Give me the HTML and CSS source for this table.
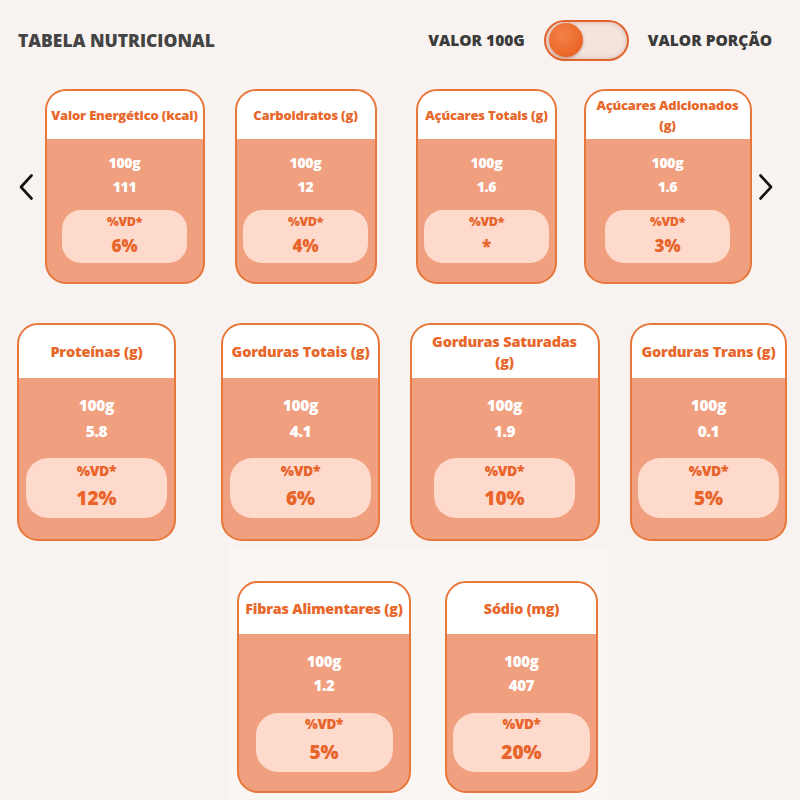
FILE: index.html
```html
<!DOCTYPE html>
<html lang="pt-BR">
<head>
<meta charset="utf-8">
<title>Tabela Nutricional</title>
<link rel="stylesheet" href="styles.css">
</head>
<body>
<div class="page">
  <header class="topbar">
    <h1 class="title">TABELA NUTRICIONAL</h1>
    <div class="switch-group">
      <span class="switch-label">VALOR 100G</span>
      <div class="toggle"><span class="knob"></span></div>
      <span class="switch-label">VALOR PORÇÃO</span>
    </div>
  </header>

  <section class="row row-1">
    <button class="arrow" aria-label="Anterior">
      <svg width="16" height="26" viewBox="0 0 16 26"><path d="M13.5 1.5 L3 13 L13.5 24.5" fill="none" stroke="#111" stroke-width="2.6" stroke-linecap="round" stroke-linejoin="round"/></svg>
    </button>
    <div class="slots">
      <div class="slot">
        <div class="card w-160">
          <div class="card-head">Valor Energético (kcal)</div>
          <div class="card-body">
            <div class="val">100g</div><div class="val">111</div>
            <div class="pill"><div class="pill-label">%VD*</div><div class="pill-value">6%</div></div>
          </div>
        </div>
      </div>
      <div class="slot">
        <div class="card w-142">
          <div class="card-head">Carboidratos (g)</div>
          <div class="card-body">
            <div class="val">100g</div><div class="val">12</div>
            <div class="pill"><div class="pill-label">%VD*</div><div class="pill-value">4%</div></div>
          </div>
        </div>
      </div>
      <div class="slot">
        <div class="card w-141">
          <div class="card-head">Açúcares Totais (g)</div>
          <div class="card-body">
            <div class="val">100g</div><div class="val">1.6</div>
            <div class="pill"><div class="pill-label">%VD*</div><div class="pill-value star">*</div></div>
          </div>
        </div>
      </div>
      <div class="slot">
        <div class="card w-168">
          <div class="card-head">Açúcares Adicionados<br>(g)</div>
          <div class="card-body">
            <div class="val">100g</div><div class="val">1.6</div>
            <div class="pill"><div class="pill-label">%VD*</div><div class="pill-value">3%</div></div>
          </div>
        </div>
      </div>
    </div>
    <button class="arrow" aria-label="Próximo">
      <svg width="16" height="26" viewBox="0 0 16 26"><path d="M2.5 1.5 L13 13 L2.5 24.5" fill="none" stroke="#111" stroke-width="2.6" stroke-linecap="round" stroke-linejoin="round"/></svg>
    </button>
  </section>

  <section class="row row-2">
    <div class="slot">
      <div class="card w-159">
        <div class="card-head">Proteínas (g)</div>
        <div class="card-body">
          <div class="val">100g</div><div class="val">5.8</div>
          <div class="pill"><div class="pill-label">%VD*</div><div class="pill-value">12%</div></div>
        </div>
      </div>
    </div>
    <div class="slot">
      <div class="card w-159">
        <div class="card-head">Gorduras Totais (g)</div>
        <div class="card-body">
          <div class="val">100g</div><div class="val">4.1</div>
          <div class="pill"><div class="pill-label">%VD*</div><div class="pill-value">6%</div></div>
        </div>
      </div>
    </div>
    <div class="slot">
      <div class="card w-190">
        <div class="card-head">Gorduras Saturadas<br>(g)</div>
        <div class="card-body">
          <div class="val">100g</div><div class="val">1.9</div>
          <div class="pill"><div class="pill-label">%VD*</div><div class="pill-value">10%</div></div>
        </div>
      </div>
    </div>
    <div class="slot">
      <div class="card w-157">
        <div class="card-head">Gorduras Trans (g)</div>
        <div class="card-body">
          <div class="val">100g</div><div class="val">0.1</div>
          <div class="pill"><div class="pill-label">%VD*</div><div class="pill-value">5%</div></div>
        </div>
      </div>
    </div>
  </section>

  <section class="row row-3">
    <div class="card w-174">
      <div class="card-head">Fibras Alimentares (g)</div>
      <div class="card-body">
        <div class="val">100g</div><div class="val">1.2</div>
        <div class="pill"><div class="pill-label">%VD*</div><div class="pill-value">5%</div></div>
      </div>
    </div>
    <div class="card w-153">
      <div class="card-head">Sódio (mg)</div>
      <div class="card-body">
        <div class="val">100g</div><div class="val">407</div>
        <div class="pill"><div class="pill-label">%VD*</div><div class="pill-value">20%</div></div>
      </div>
    </div>
  </section>
</div>
</body>
</html>
```

FILE: styles.css
```css
* { box-sizing: border-box; }

html, body {
  margin: 0;
  padding: 0;
  background: #f8f3f0;
  overflow: hidden;
}

body {
  font-family: "Open Sans", "Lato", "Liberation Sans", sans-serif;
  color: #3c3c3c;
  width: 800px;
  height: 800px;
}

.page {
  width: 800px;
}

/* ---------- top bar ---------- */
.topbar {
  height: 80px;
  display: flex;
  align-items: center;
  justify-content: space-between;
  padding: 0 28px 0 18px;
}

.title {
  margin: 0;
  font-size: 17.5px;
  font-weight: 800;
  letter-spacing: 0;
  color: #444444;
}

.switch-group {
  display: flex;
  align-items: center;
  gap: 19px;
}

.switch-label {
  font-size: 15.5px;
  font-weight: 800;
  letter-spacing: 0;
  color: #3a3a3a;
}

.toggle {
  width: 85px;
  height: 41px;
  border: 2px solid #e2632b;
  border-radius: 21px;
  background: #f3e4de;
  box-shadow: inset 0 0 5px rgba(160, 90, 60, 0.35);
  display: flex;
  align-items: center;
  padding-left: 3px;
}

.knob {
  width: 34px;
  height: 34px;
  border-radius: 50%;
  background: radial-gradient(circle at 40% 35%, #f3824a 0%, #ec6a2b 60%, #de5519 100%);
  box-shadow: 0 1px 3px rgba(120, 50, 20, 0.45);
}

/* ---------- rows ---------- */
.row-1 {
  margin-top: 9px;
  display: flex;
  align-items: center;
  padding-left: 18px;
}

.arrow {
  width: 16px;
  height: 26px;
  padding: 0;
  border: 0;
  background: none;
  display: flex;
  align-items: center;
  justify-content: center;
}

.slots {
  display: grid;
  grid-template-columns: repeat(4, 181px);
}

.slot {
  display: flex;
  justify-content: center;
}

.row-2 {
  margin-top: 39px;
  margin-left: -5.5px;
  display: grid;
  grid-template-columns: repeat(4, 204px);
}

.row-3 {
  margin-top: 6px;
  margin-left: 228px;
  width: 380px;
  height: 260px;
  padding: 34px 0 0 9px;
  background: #faf6f4;
  display: flex;
  align-items: flex-start;
  gap: 34px;
}

/* ---------- card ---------- */
.card {
  border: 2px solid #e7773a;
  border-radius: 21px;
  overflow: hidden;
  background: #f0a07f;
  display: flex;
  flex-direction: column;
}

.w-141 { width: 141px; }
.w-142 { width: 142px; }
.w-153 { width: 153px; }
.w-157 { width: 157px; }
.w-159 { width: 159px; }
.w-160 { width: 160px; }
.w-168 { width: 168px; }
.w-174 { width: 174px; }
.w-190 { width: 190px; }

.card-head {
  background: #ffffff;
  color: #e8672b;
  font-weight: 800;
  text-align: center;
  display: flex;
  align-items: center;
  justify-content: center;
  line-height: 20px;
  white-space: nowrap;
  letter-spacing: -0.2px;
}

.card-body {
  display: flex;
  flex-direction: column;
  align-items: center;
}

.val {
  color: #ffffff;
  font-weight: 800;
  letter-spacing: -0.3px;
}

.pill {
  background: #fddacb;
  border-radius: 19px;
  display: flex;
  flex-direction: column;
  align-items: center;
  color: #e8642a;
}

.pill-label {
  font-weight: 800;
  letter-spacing: -0.3px;
}

.pill-value {
  font-weight: 800;
  letter-spacing: 0;
}

/* row 1 sizing */
.row-1 .card-head { height: 48px; font-size: 13px; }
.row-1 .card-body { padding-top: 12px; height: 143px; }
.row-1 .val { font-size: 14px; line-height: 24px; }
.row-1 .pill { width: 125px; height: 53px; margin-top: 11px; padding-top: 2px; }
.row-1 .pill-label { font-size: 12.5px; line-height: 20px; }
.row-1 .pill-value { font-size: 17px; line-height: 28px; }

/* row 2 sizing */
.row-2 .card-head { height: 53px; font-size: 14.5px; }
.row-2 .card-body { padding-top: 14px; height: 161px; }
.row-2 .val { font-size: 15.5px; line-height: 26px; }
.row-2 .pill { width: 141px; height: 60px; margin-top: 14px; padding-top: 2px; border-radius: 22px; }
.row-2 .pill-label { font-size: 14px; line-height: 22px; }
.row-2 .pill-value { font-size: 19px; line-height: 33px; }

/* row 3 sizing */
.row-3 .card-head { height: 51px; font-size: 14.3px; }
.row-3 .card-body { padding-top: 15px; height: 157px; }
.row-3 .val { font-size: 15px; line-height: 24px; }
.row-3 .pill { width: 137px; height: 59px; margin-top: 16px; padding-top: 1px; border-radius: 22px; }
.row-3 .pill-label { font-size: 13.5px; line-height: 20px; }
.row-3 .pill-value { font-size: 19px; line-height: 36px; }

.star { font-size: 17px; }
```
